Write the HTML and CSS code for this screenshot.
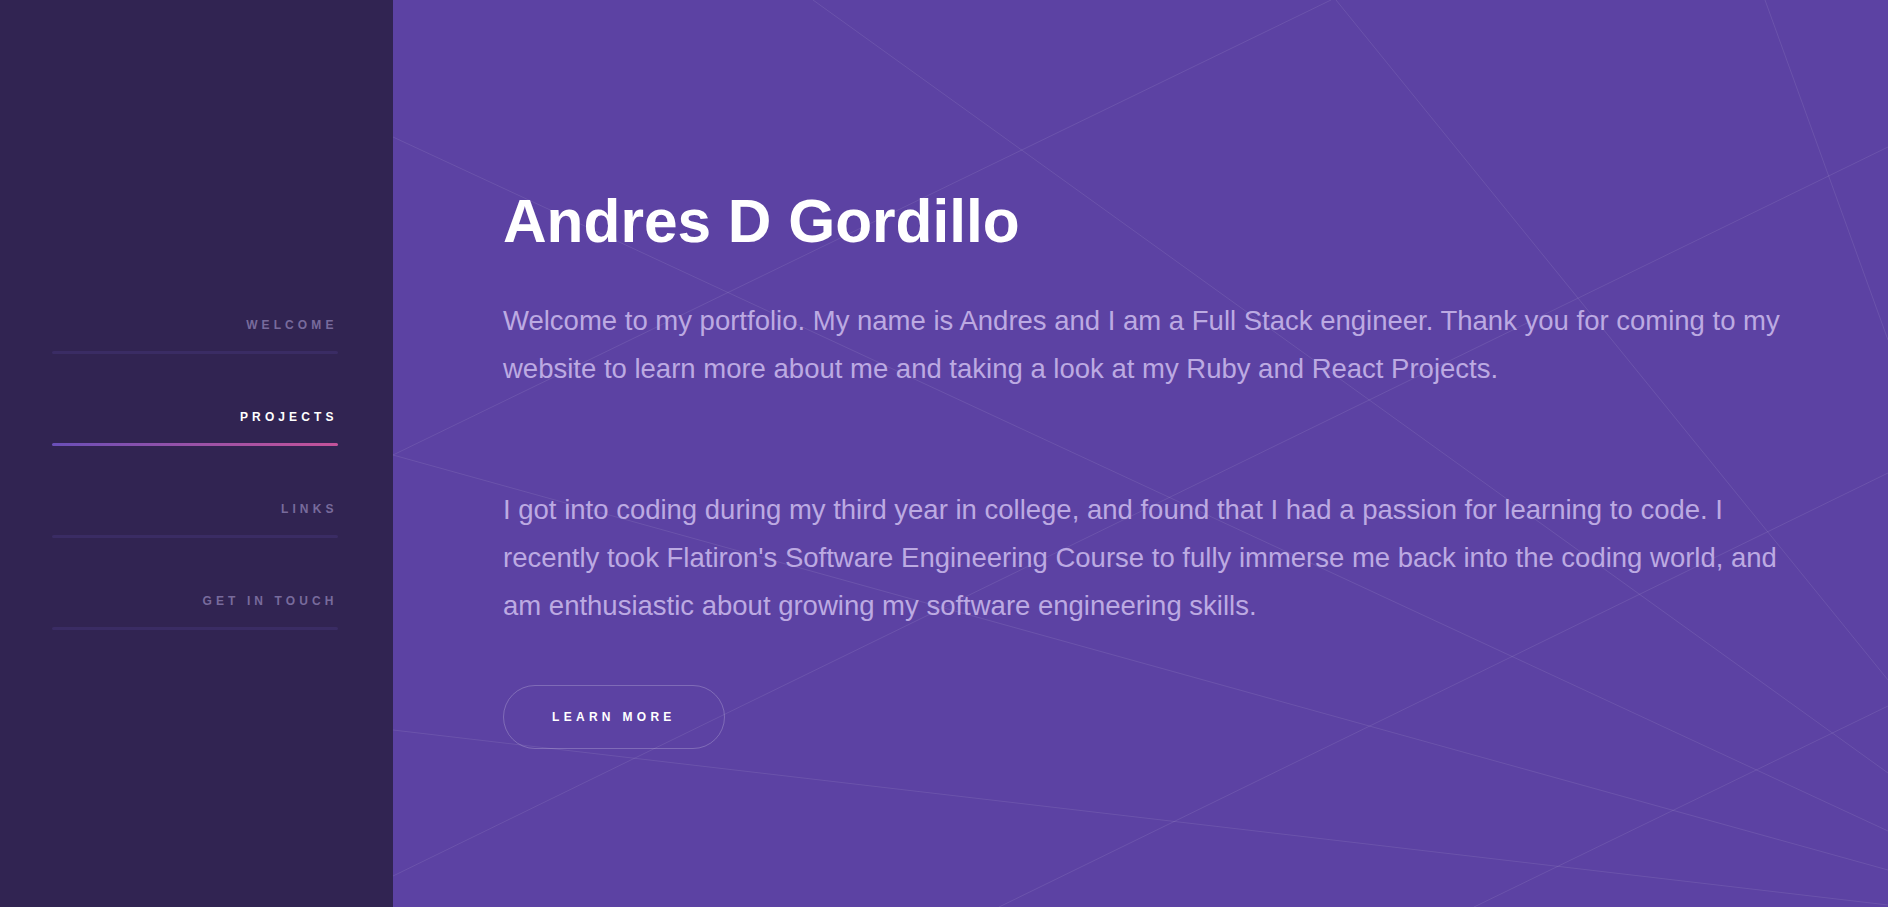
FILE: index.html
```html
<!DOCTYPE html>
<html lang="en">
<head>
<meta charset="utf-8">
<title>Andres D Gordillo</title>
<link rel="stylesheet" href="styles.css">
</head>
<body>
<div class="layout">
  <aside class="sidebar">
    <nav class="nav">
      <a class="nav-item" href="#welcome"><span class="nav-label">WELCOME</span></a>
      <a class="nav-item is-active" href="#projects"><span class="nav-label">PROJECTS</span></a>
      <a class="nav-item" href="#links"><span class="nav-label">LINKS</span></a>
      <a class="nav-item" href="#contact"><span class="nav-label">GET IN TOUCH</span></a>
    </nav>
  </aside>
  <main class="main">
    <svg class="bg-lines" viewBox="0 0 1495 907" preserveAspectRatio="none" aria-hidden="true">
      <line x1="420" y1="0" x2="1495" y2="773"/>
      <line x1="0" y1="137" x2="1495" y2="831"/>
      <line x1="0" y1="455" x2="938" y2="0"/>
      <line x1="0" y1="455" x2="1495" y2="870"/>
      <line x1="0" y1="730" x2="1495" y2="905"/>
      <line x1="0" y1="876" x2="1495" y2="147"/>
      <line x1="943" y1="0" x2="1495" y2="680"/>
      <line x1="1372" y1="0" x2="1495" y2="340"/>
      <line x1="1081" y1="907" x2="1495" y2="706"/>
      <line x1="606" y1="907" x2="1495" y2="473"/>
    </svg>
    <section class="content">
      <h1 class="title">Andres D Gordillo</h1>
      <p class="text">Welcome to my portfolio. My name is Andres and I am a Full Stack engineer. Thank you for coming to my website to learn more about me and taking a look at my Ruby and React Projects.</p>
      <p class="text text-second">I got into coding during my third year in college, and found that I had a passion for learning to code. I recently took Flatiron's Software Engineering Course to fully immerse me back into the coding world, and am enthusiastic about growing my software engineering skills.</p>
      <a class="btn" href="#about"><span class="btn-label">LEARN MORE</span></a>
    </section>
  </main>
</div>
</body>
</html>
```

FILE: styles.css
```css
* { box-sizing: border-box; }

html, body {
  margin: 0;
  padding: 0;
  height: 100%;
}

body {
  font-family: "Liberation Sans", Arial, sans-serif;
  background: #5c42a3;
  overflow: hidden;
}

.layout {
  display: flex;
  height: 907px;
}

.sidebar {
  flex: 0 0 393px;
  background: #312452;
  display: flex;
  flex-direction: column;
  justify-content: center;
  padding: 0 55px 0 52px;
}

.nav {
  display: flex;
  flex-direction: column;
}

.nav-item {
  display: flex;
  flex-direction: column;
  align-items: flex-end;
  padding: 48px 0 8px;
  text-decoration: none;
  color: #786b9c;
  font-size: 12px;
  font-weight: 700;
  line-height: 14px;
  letter-spacing: 4.1px;
}

.nav-label {
  margin-right: 0.5px;
}

.nav-item::after {
  content: "";
  align-self: stretch;
  height: 3px;
  margin-top: 19px;
  border-radius: 2px;
  background: #3a2c64;
}

.nav-item.is-active {
  color: #ffffff;
}

.nav-item.is-active::after {
  background: linear-gradient(90deg, #6a4fb8 0%, #9a52a8 50%, #c4529a 100%);
}

.main {
  position: relative;
  flex: 1 1 auto;
  background: #5c42a3;
  overflow: hidden;
}

.bg-lines {
  position: absolute;
  inset: 0;
  width: 100%;
  height: 100%;
  pointer-events: none;
}

.bg-lines line {
  stroke: rgba(255, 255, 255, 0.09);
  stroke-width: 1;
}

.content {
  position: relative;
  padding: 185px 0 0 110px;
  max-width: 1408px;
}

.title {
  margin: 0;
  color: #ffffff;
  font-size: 60.4px;
  font-weight: 700;
  line-height: 72px;
}

.text {
  margin: 40px 0 0;
  color: #bcaae2;
  font-size: 27.5px;
  line-height: 48px;
}

.text-second {
  margin-top: 93px;
}

.btn {
  display: inline-block;
  margin-top: 55px;
  padding: 24px 48px;
  border: 1px solid rgba(255, 255, 255, 0.22);
  border-radius: 32px;
  color: #ffffff;
  text-decoration: none;
  font-size: 12px;
  font-weight: 700;
  line-height: 14px;
  letter-spacing: 4.3px;
}
```
